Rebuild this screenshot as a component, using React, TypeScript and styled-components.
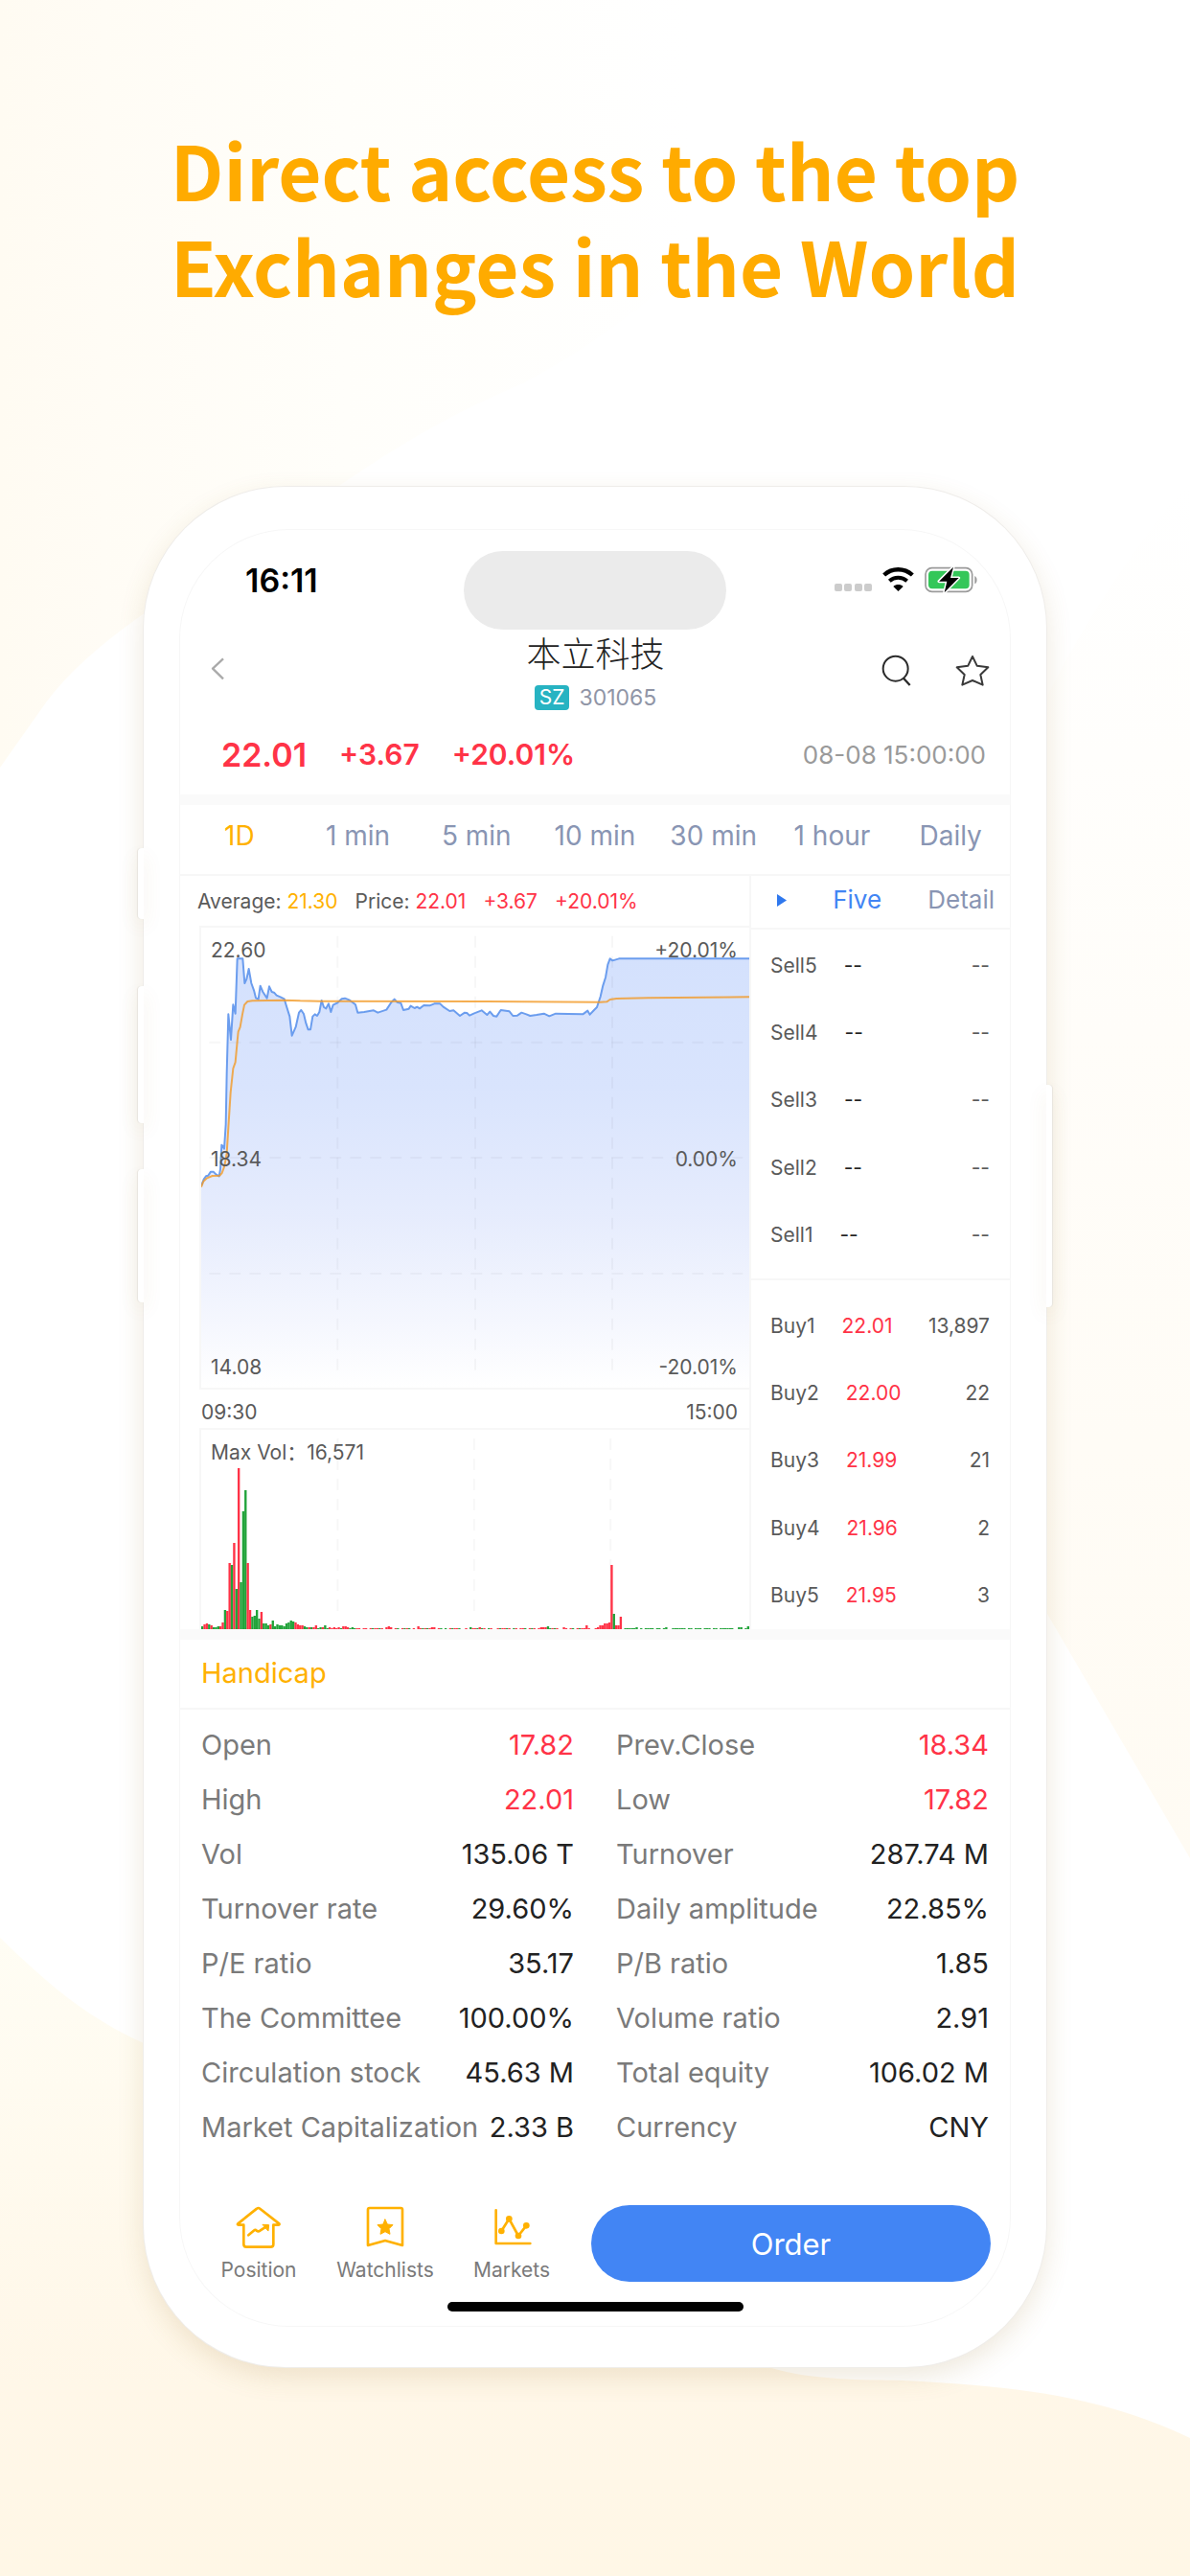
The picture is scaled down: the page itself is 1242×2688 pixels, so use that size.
import React, { useState } from "react";
import styled, { createGlobalStyle } from "styled-components";

const sans = `Inter, "Noto Sans CJK SC", sans-serif`;

const color = {
  amber: "#ffb100",
  red: "#ff3347",
  green: "#22a33a",
  blue: "#2f78ee",
  button: "#4285f4",
  ink: "#222222",
  body: "#5a5a5a",
  label: "#7a7a7a",
  muted: "#9a9a9a",
  slate: "#8995b3",
  line: "#f7f7f7",
  band: "#fafafa",
};

const GlobalStyle = createGlobalStyle`
  * { box-sizing: border-box; }
  body { margin: 0; background: #ffffff; font-family: ${sans}; }
  button { font: inherit; color: inherit; background: none; border: 0; padding: 0; cursor: pointer; }
  h1, h2, p, dl, dd, dt { margin: 0; }
  svg { display: block; }
`;

/* ---------- page ---------- */

const Page = styled.main`
  position: relative;
  min-height: 100vh;
  padding: 126px 150px 218px;
  overflow: hidden;
`;

const Backdrop = styled.svg`
  position: absolute;
  inset: 0;
  width: 100%;
  height: 100%;
`;

const Headline = styled.h1`
  position: relative;
  font: 700 78px/100px "Noto Sans CJK SC", "Noto Sans", sans-serif;
  color: #ffab00;
  text-align: center;
  white-space: nowrap;
`;

/* ---------- phone ---------- */

const Phone = styled.section`
  position: relative;
  max-width: 1100px;
  margin: 182px auto 0;
  padding: 45px 38px 43px;
  background: #ffffff;
  border-radius: 148px;
  box-shadow:
    0 0 0 1px #efedea,
    0 10px 28px rgba(150, 110, 40, 0.16);
`;

const SideKey = styled.span<{ $side: "left" | "right"; $top: number; $height: number }>`
  position: absolute;
  ${(p) => p.$side}: -6px;
  top: ${(p) => p.$top}px;
  width: 6px;
  height: ${(p) => p.$height}px;
  background: #ffffff;
  border-radius: ${(p) => (p.$side === "left" ? "4px 0 0 4px" : "0 4px 4px 0")};
  box-shadow: ${(p) => (p.$side === "left" ? "-1px" : "1px")} 0 1px #e8e5df,
    0 8px 20px rgba(150, 110, 40, 0.12);
`;

const Screen = styled.div`
  border-radius: 114px;
  overflow: hidden;
  box-shadow: 0 0 0 1px ${color.line};
`;

const StatusBar = styled.div`
  display: grid;
  grid-template-columns: 1fr 274px 1fr;
  align-items: center;
  height: 104px;
`;

const Clock = styled.time`
  padding-left: 68px;
  font-size: 34px;
  font-weight: 600;
  color: #000000;
`;

const Island = styled.div`
  align-self: end;
  height: 82px;
  border-radius: 41px;
  background: #ebebeb;
`;

const Indicators = styled.div`
  display: flex;
  justify-content: flex-end;
  align-items: center;
  gap: 11px;
  padding-right: 33px;
`;

/* ---------- title ---------- */

const TitleBar = styled.header`
  display: grid;
  grid-template-columns: 1fr auto 1fr;
  align-items: center;
  padding: 2px 21px 2px 22px;
`;

const Actions = styled.div`
  display: flex;
  justify-content: flex-end;
  gap: 43px;
`;

const Title = styled.div`
  display: flex;
  flex-direction: column;
  align-items: center;
  gap: 14px;
`;

const Name = styled.h2`
  font: 300 36px/42px "Noto Sans CJK SC", sans-serif;
  color: ${color.ink};
`;

const Code = styled.p`
  display: flex;
  align-items: center;
  gap: 10px;
  font-size: 23px;
  line-height: 26px;
  color: #9095a6;
`;

const Exchange = styled.span`
  padding: 0 5px;
  border-radius: 4px;
  background: #27b3c2;
  color: #ffffff;
  font-size: 21px;
`;

const Quote = styled.div`
  display: flex;
  align-items: center;
  gap: 34px;
  padding: 2px 25px 0 43px;
  height: 86px;
  color: ${color.red};
  font-size: 30px;
  font-weight: 600;
`;

const LastPrice = styled.strong`
  font-size: 34px;
  font-weight: 600;
`;

const Stamp = styled.time`
  margin-left: auto;
  font-size: 26px;
  font-weight: 400;
  color: ${color.muted};
`;

const Band = styled.div`
  height: 11px;
  background: ${color.band};
`;

const Periods = styled.nav`
  display: grid;
  grid-template-columns: repeat(7, 1fr);
  border-bottom: 2px solid ${color.line};
`;

const Period = styled.button<{ $on: boolean }>`
  && {
    padding: 16px 0 24px;
    font-size: 28px;
    line-height: 32px;
    white-space: nowrap;
    color: ${(p) => (p.$on ? color.amber : color.slate)};
  }
`;

/* ---------- charts ---------- */

const Market = styled.div`
  display: grid;
  grid-template-columns: 1fr 272px;
`;

const Charts = styled.div`
  display: flex;
  flex-direction: column;
  padding-left: 20px;
  font-size: 21px;
  line-height: 24px;
  color: ${color.body};
`;

const Summary = styled.p`
  display: flex;
  align-items: center;
  gap: 18px;
  height: 52px;
  padding-top: 2px;
  margin-left: -2px;
  white-space: nowrap;
`;

const Tint = styled.span<{ $c: string }>`
  color: ${(p) => p.$c};
`;

const Plot = styled.div<{ $height: number; $closed?: boolean }>`
  position: relative;
  height: ${(p) => p.$height}px;
  border: 2px solid ${color.line};
  border-right: 0;
  border-bottom-width: ${(p) => (p.$closed ? 2 : 0)}px;
`;

const Drawing = styled.svg`
  width: 100%;
  height: 100%;
`;

const Scale = styled.div`
  position: absolute;
  inset: 0;
  display: flex;
  flex-direction: column;
  justify-content: space-between;
  padding: 12px 12px 9px 10px;
`;

const ScaleRow = styled.div`
  display: flex;
  justify-content: space-between;
`;

const Hours = styled.div`
  display: flex;
  justify-content: space-between;
  padding: 12px 12px 4px 2px;
`;

/* ---------- order book ---------- */

const Book = styled.div`
  display: flex;
  flex-direction: column;
  border-left: 2px solid ${color.line};
`;

const BookTabs = styled.div`
  display: flex;
  align-items: center;
  justify-content: space-between;
  height: 54px;
  padding: 0 16px 4px 27px;
`;

const BookTab = styled.button<{ $on: boolean }>`
  && {
    font-size: 26px;
    line-height: 32px;
    color: ${(p) => (p.$on ? color.button : color.slate)};
  }
`;

const Levels = styled.table<{ $pad: string }>`
  display: flex;
  flex: 1;
  border-top: 2px solid ${color.line};
  padding: ${(p) => p.$pad};
  font-size: 21px;
  color: ${color.body};

  tbody {
    flex: 1;
    display: grid;
    grid-auto-rows: 1fr;
  }
`;

const Level = styled.tr`
  display: flex;
  align-items: center;
  padding: 0 21px 0 20px;
`;

const Side = styled.th`
  padding: 0 28px 0 0;
  font-weight: 400;
`;

const Price = styled.td<{ $c: string }>`
  padding: 0;
  color: ${(p) => p.$c};
`;

const Volume = styled.td`
  padding: 0;
  margin-left: auto;
`;

/* ---------- handicap ---------- */

const HandicapTitle = styled.h2`
  padding: 19px 22px 20px;
  border-bottom: 2px solid ${color.line};
  font-size: 29px;
  font-weight: 400;
  line-height: 32px;
  color: ${color.amber};
`;

const Facts = styled.dl`
  display: grid;
  grid-template-columns: 1fr 1fr;
  column-gap: 44px;
  padding: 8px 22px 53px;
`;

const Fact = styled.div`
  display: flex;
  justify-content: space-between;
  font-size: 29px;
  line-height: 57px;
  white-space: nowrap;
  color: ${color.label};
`;

const FactValue = styled.dd<{ $c?: string }>`
  color: ${(p) => p.$c ?? color.ink};
`;

/* ---------- bottom bar ---------- */

const BottomBar = styled.footer`
  display: grid;
  grid-template-columns: repeat(3, 132px) 1fr;
  padding: 0 20px 0 16px;
`;

const NavItem = styled.button`
  && {
    display: flex;
    flex-direction: column;
    align-items: center;
    gap: 8px;
    font-size: 21px;
    line-height: 24px;
    color: ${color.label};
  }
`;

const OrderButton = styled.button`
  && {
    height: 80px;
    margin-left: 17px;
    border-radius: 40px;
    background: ${color.button};
    color: #ffffff;
    font-size: 31px;
  }
`;

const HomeIndicator = styled.div`
  width: 309px;
  height: 10px;
  margin: 21px auto 15px;
  border-radius: 5px;
  background: #000000;
`;

/* ---------- data ---------- */

const periods = ["1D", "1 min", "5 min", "10 min", "30 min", "1 hour", "Daily"];

const sells = ["Sell5", "Sell4", "Sell3", "Sell2", "Sell1"];

const buys = [
  ["Buy1", "22.01", "13,897"],
  ["Buy2", "22.00", "22"],
  ["Buy3", "21.99", "21"],
  ["Buy4", "21.96", "2"],
  ["Buy5", "21.95", "3"],
];

const facts: [string, string, string?][] = [
  ["Open", "17.82", color.red],
  ["Prev.Close", "18.34", color.red],
  ["High", "22.01", color.red],
  ["Low", "17.82", color.red],
  ["Vol", "135.06 T"],
  ["Turnover", "287.74 M"],
  ["Turnover rate", "29.60%"],
  ["Daily amplitude", "22.85%"],
  ["P/E ratio", "35.17"],
  ["P/B ratio", "1.85"],
  ["The Committee", "100.00%"],
  ["Volume ratio", "2.91"],
  ["Circulation stock", "45.63 M"],
  ["Total equity", "106.02 M"],
  ["Market Capitalization", "2.33 B"],
  ["Currency", "CNY"],
];

const priceLine =
  "0,808 8,788 15,778 22,776 30,764 38,764 46,772 56,778 60,756 64,680 72,692 77,616 80,456 85,271 93,351 100,241 107,269 113,97 130,97 136,174 142,161 149,129 157,174 165,196 171,220 179,224 185,182 193,201 206,221 213,184 221,201 228,203 236,212 248,217 260,223 267,246 277,278 284,338 296,311 306,266 313,258 321,270 328,299 335,319 342,319 349,278 356,271 363,276 370,264 377,228 384,249 391,253 399,238 406,264 413,242 427,235 440,223 450,221 465,227 483,241 490,266 510,264 540,259 553,266 580,257 595,234 605,224 613,233 625,236 633,258 650,254 656,245 668,252 676,248 684,253 697,243 715,244 730,238 748,238 758,248 778,261 790,259 810,276 825,266 832,267 840,275 855,268 878,259 895,273 904,263 915,276 925,278 938,258 965,262 976,276 990,275 1003,266 1018,271 1030,276 1050,273 1073,269 1090,277 1110,269 1150,270 1195,271 1210,260 1217,272 1230,258 1239,249 1250,216 1258,181 1266,156 1273,116 1280,97 1288,103 1308,97 1716,97";

const averageLine =
  "0,812 7,794 18,784 35,777 58,776 65,768 73,746 80,706 85,626 92,516 100,441 107,421 113,356 116,326 122,311 129,271 135,242 145,231 160,229 260,227 310,229 370,230 890,231 1250,233 1270,232 1280,225 1300,222 1400,220 1716,217";

/* One entry per minute: r / g for the direction, then the bar height. */
const openingVolumes =
  "g3 r5 r6 g5 r4 g2 g2 g3 r3 r7 g20 r19 r69 g67 r90 g42 r168 g49 g123 g145 r69 r20 g13 g14 g20 g11 r18 g6 g6 g4 r5 g9 g3 g5 g4 g4 g3 g6 g7 g9 g8 r7 r5 r4 r4 g3 g2 r2 g2 r2 r4 g1 g2 r2 g4 g1 r2 r1 r2 r1 r2 g1 r3 r3 r2 g1 g2 g1".split(
    " ",
  );
const spikes: Record<number, string> = {
  81: "r2", 82: "r3", 83: "r2", 95: "r3", 101: "r2", 102: "r2", 118: "g2", 122: "r2",
  149: "r2", 150: "r2", 151: "r2", 152: "g3", 159: "r2", 169: "r4", 174: "r2", 175: "r4",
  176: "r4", 177: "r6", 178: "r6", 179: "r7", 180: "r67", 181: "g16", 182: "r4", 183: "r4",
  184: "r13", 191: "g2", 204: "g2", 236: "g2", 237: "g2", 240: "g3",
};
const volumes = Array.from({ length: 241 }, (_, i) => {
  if (i < openingVolumes.length) return openingVolumes[i];
  if (spikes[i]) return spikes[i];
  if (i % 7 === 3 || (i * i) % 11 === 5) return "";
  return (i > 184 ? "g" : (i * 5) % 8 < 5 ? "r" : "g") + "1";
});

/* ---------- drawings ---------- */

function BackdropArt() {
  return (
    <Backdrop viewBox="0 0 1242 2688" preserveAspectRatio="none" aria-hidden="true">
      <defs>
        <linearGradient id="bgTop" x1="0" y1="0" x2="1" y2="0">
          <stop offset="0" stopColor="#fffbf2" />
          <stop offset="0.12" stopColor="#fffcf5" />
          <stop offset="0.4" stopColor="#fffefa" />
          <stop offset="0.8" stopColor="#ffffff" />
        </linearGradient>
        <linearGradient id="bgBottom" x1="0" y1="0" x2="0" y2="1">
          <stop offset="0" stopColor="#fffdf4" />
          <stop offset="0.7" stopColor="#fff7e8" />
          <stop offset="1" stopColor="#fff7e6" />
        </linearGradient>
        <linearGradient id="bgRight" x1="0" y1="0" x2="0" y2="1">
          <stop offset="0" stopColor="#ffffff" />
          <stop offset="0.4" stopColor="#fffdf9" />
          <stop offset="1" stopColor="#fffbf3" />
        </linearGradient>
      </defs>
      <path d="M0 0H900C820 230 640 350 546 400C440 445 380 490 320 530C250 580 110 650 48 733L0 801Z" fill="url(#bgTop)" />
      <path d="M1242 500C1160 600 1100 700 1060 800V1640L1093 1684L1242 1939Z" fill="url(#bgRight)" />
      <path d="M0 2022C50 2070 90 2105 150 2132C400 2230 640 2400 805 2471C850 2484 900 2483 942 2484C1060 2490 1150 2500 1242 2544V2688H0Z" fill="url(#bgBottom)" />
    </Backdrop>
  );
}

function StatusIcons() {
  return (
    <Indicators>
      <svg width="39" height="26" viewBox="0 0 39 26" fill="#cccccc" aria-hidden="true">
        {[0, 10, 21, 31].map((x) => (
          <rect key={x} x={x} y="17" width="8" height="8" rx="2" />
        ))}
      </svg>
      <svg width="33" height="26" viewBox="0 0 99 78" aria-label="Wi-Fi">
        <g fill="none" stroke="#000000">
          <path d="M5 24C30 1 68 1 94 24" strokeWidth="13" />
          <path d="M22 43C37 29 61 29 77 43" strokeWidth="12" />
        </g>
        <path d="M49.500 75L34 60C43 52 56 52 65 60Z" fill="#000000" />
      </svg>
      <svg width="56" height="28" viewBox="0 0 168 84" aria-label="Battery charging">
        <rect x="3" y="5" width="146" height="74" rx="20" fill="none" stroke="#9b9b9b" strokeWidth="5" />
        <rect x="12" y="14" width="128" height="56" rx="12" fill="#34c759" />
        <path d="M157 30C166 34 166 51 157 55Z" fill="#9b9b9b" />
        <path d="M90 2L45 47H70L62 82L107 36H81Z" fill="#000000" stroke="#ffffff" strokeWidth="9" paintOrder="stroke" strokeLinejoin="round" />
      </svg>
    </Indicators>
  );
}

function PriceChart() {
  return (
    <Drawing viewBox="0 0 1716 1440" preserveAspectRatio="none" role="img" aria-label="Intraday price">
      <defs>
        <linearGradient id="area" gradientUnits="userSpaceOnUse" x1="0" y1="97" x2="0" y2="1440">
          <stop offset="0" stopColor="#d4e1fd" />
          <stop offset="0.3" stopColor="#d9e4fd" />
          <stop offset="0.6" stopColor="#e6ecfd" />
          <stop offset="0.85" stopColor="#f5f7fe" />
          <stop offset="1" stopColor="#ffffff" />
        </linearGradient>
      </defs>
      <polygon points={`${priceLine} 1716,1440 0,1440`} fill="url(#area)" />
      <g stroke="#000000" strokeOpacity="0.03" strokeWidth="2" strokeDasharray="12 9">
        {[427, 858, 1287].map((x) => (
          <line key={x} x1={x} x2={x} y1="26" y2="1390" vectorEffect="non-scaling-stroke" />
        ))}
        {[359, 720, 1083].map((y) => (
          <line key={y} x1="25" x2="1696" y1={y} y2={y} vectorEffect="non-scaling-stroke" />
        ))}
      </g>
      <g fill="none" strokeWidth="2" strokeLinejoin="round">
        <polyline points={priceLine} stroke="#6b9dee" vectorEffect="non-scaling-stroke" />
        <polyline points={averageLine} stroke="#f29a26" strokeOpacity="0.8" vectorEffect="non-scaling-stroke" />
      </g>
    </Drawing>
  );
}

function VolumeChart() {
  return (
    <Drawing viewBox="0 0 241 208" preserveAspectRatio="none" role="img" aria-label="Intraday volume">
      <g stroke="#000000" strokeOpacity="0.03" strokeWidth="2" strokeDasharray="12 9">
        {[60, 120, 180].map((x) => (
          <line key={x} x1={x} x2={x} y1="9" y2="190" vectorEffect="non-scaling-stroke" />
        ))}
      </g>
      {volumes.map((v, i) => {
        if (!v) return null;
        const h = Number(v.slice(1));
        return <rect key={i} x={i} y={208 - h} width="1" height={h} fill={v[0] === "r" ? color.red : color.green} />;
      })}
    </Drawing>
  );
}

function NavIcon({ kind }: { kind: string }) {
  return (
    <svg width="48" height="48" viewBox="0 0 144 144" fill="none" stroke={color.amber} strokeWidth="8" strokeLinecap="round" strokeLinejoin="round" aria-hidden="true">
      {kind === "Position" && (
        <>
          <path d="M66 11Q71 7 76 11L136 58Q138 61 134 62H118V122Q118 131 109 131H34Q25 131 25 122V62H9Q4 61 7 58Z" />
          <path d="M40 94L58 79Q61 76 65 80Q71 84 76 80L96 67" />
          <path d="M85 61L104 62L102 80Z" fill={color.amber} strokeWidth="3" />
        </>
      )}
      {kind === "Watchlists" && (
        <>
          <path d="M23 9H121Q126 9 126 14V126L72 111L18 126V14Q18 9 23 9Z" />
          <path d="M72 45L79 60L96 62L84 74L87 91L72 83L57 91L60 74L48 62L65 60Z" fill={color.amber} strokeWidth="3" />
        </>
      )}
      {kind === "Markets" && (
        <>
          <path d="M23 16V120H130" />
          <path d="M40 81L64 43L93 96L118 64" />
          <g fill={color.amber} stroke="none">
            <circle cx="40" cy="81" r="10" />
            <circle cx="64" cy="43" r="10" />
            <circle cx="93" cy="96" r="10" />
            <circle cx="118" cy="64" r="10" />
          </g>
        </>
      )}
    </svg>
  );
}

/* ---------- app ---------- */

export default function App() {
  const [period, setPeriod] = useState("1D");
  const [view, setView] = useState("Five");

  return (
    <Page>
      <GlobalStyle />
      <BackdropArt />
      <Headline>
        Direct access to the top
        <br />
        Exchanges in the World
      </Headline>

      <Phone>
        <SideKey $side="left" $top={377} $height={74} />
        <SideKey $side="left" $top={521} $height={143} />
        <SideKey $side="left" $top={712} $height={139} />
        <SideKey $side="right" $top={624} $height={232} />

        <Screen>
          <StatusBar>
            <Clock>16:11</Clock>
            <Island />
            <StatusIcons />
          </StatusBar>

          <TitleBar>
            <div>
              <button aria-label="Back">
                <svg width="36" height="36" viewBox="0 0 108 108" fill="none" stroke="#aaaaaa" strokeWidth="7" strokeLinejoin="round">
                  <path d="M69 22L36 53L69 85" />
                </svg>
              </button>
            </div>
            <Title>
              <Name>本立科技</Name>
              <Code>
                <Exchange>SZ</Exchange>
                <span>301065</span>
              </Code>
            </Title>
            <Actions>
              <button aria-label="Search">
                <svg width="36" height="36" viewBox="0 0 108 108" fill="none" stroke="#2b2b2b" strokeWidth="6">
                  <circle cx="50" cy="47" r="39" />
                  <path d="M75 77L95 99" strokeWidth="7" />
                </svg>
              </button>
              <button aria-label="Add to watchlist">
                <svg width="36" height="36" viewBox="0 0 108 108" fill="none" stroke="#3a3a3a" strokeWidth="6" strokeLinejoin="round">
                  <path d="M54 9L68 38L103 43L79 66L86 98L54 84L22 98L29 66L5 43L40 38Z" />
                </svg>
              </button>
            </Actions>
          </TitleBar>

          <Quote>
            <LastPrice>22.01</LastPrice>
            <span>+3.67</span>
            <span>+20.01%</span>
            <Stamp>08-08 15:00:00</Stamp>
          </Quote>
          <Band />

          <Periods>
            {periods.map((p) => (
              <Period key={p} $on={p === period} onClick={() => setPeriod(p)}>
                {p}
              </Period>
            ))}
          </Periods>

          <Market>
            <Charts>
              <Summary>
                <span>
                  Average: <Tint $c={color.amber}>21.30</Tint>
                </span>
                <span>
                  Price: <Tint $c={color.red}>22.01</Tint>
                </span>
                <Tint $c={color.red}>+3.67</Tint>
                <Tint $c={color.red}>+20.01%</Tint>
              </Summary>
              <Plot $height={484} $closed>
                <PriceChart />
                <Scale>
                  <ScaleRow>
                    <span>22.60</span>
                    <span>+20.01%</span>
                  </ScaleRow>
                  <ScaleRow>
                    <span>18.34</span>
                    <span>0.00%</span>
                  </ScaleRow>
                  <ScaleRow>
                    <span>14.08</span>
                    <span>-20.01%</span>
                  </ScaleRow>
                </Scale>
              </Plot>
              <Hours>
                <span>09:30</span>
                <span>15:00</span>
              </Hours>
              <Plot $height={210}>
                <VolumeChart />
                <Scale>
                  <span>Max Vol：16,571</span>
                </Scale>
              </Plot>
            </Charts>

            <Book>
              <BookTabs>
                <button aria-label="Collapse order book">
                  <svg width="10" height="13" viewBox="0 0 10 13" fill={color.blue}>
                    <path d="M0 0L10 6.500L0 13Z" />
                  </svg>
                </button>
                {["Five", "Detail"].map((t) => (
                  <BookTab key={t} $on={t === view} onClick={() => setView(t)}>
                    {t}
                  </BookTab>
                ))}
              </BookTabs>
              <Levels $pad="2px 0 10px">
                <tbody>
                  {sells.map((s) => (
                    <Level key={s}>
                      <Side scope="row">{s}</Side>
                      <Price $c={color.ink}>--</Price>
                      <Volume>--</Volume>
                    </Level>
                  ))}
                </tbody>
              </Levels>
              <Levels $pad="12px 0 0">
                <tbody>
                  {buys.map(([side, price, volume]) => (
                    <Level key={side}>
                      <Side scope="row">{side}</Side>
                      <Price $c={color.red}>{price}</Price>
                      <Volume>{volume}</Volume>
                    </Level>
                  ))}
                </tbody>
              </Levels>
            </Book>
          </Market>
          <Band />

          <HandicapTitle>Handicap</HandicapTitle>
          <Facts>
            {facts.map(([name, value, tint]) => (
              <Fact key={name}>
                <dt>{name}</dt>
                <FactValue $c={tint}>{value}</FactValue>
              </Fact>
            ))}
          </Facts>

          <BottomBar>
            {["Position", "Watchlists", "Markets"].map((n) => (
              <NavItem key={n}>
                <NavIcon kind={n} />
                {n}
              </NavItem>
            ))}
            <OrderButton>Order</OrderButton>
          </BottomBar>
          <HomeIndicator />
        </Screen>
      </Phone>
    </Page>
  );
}
